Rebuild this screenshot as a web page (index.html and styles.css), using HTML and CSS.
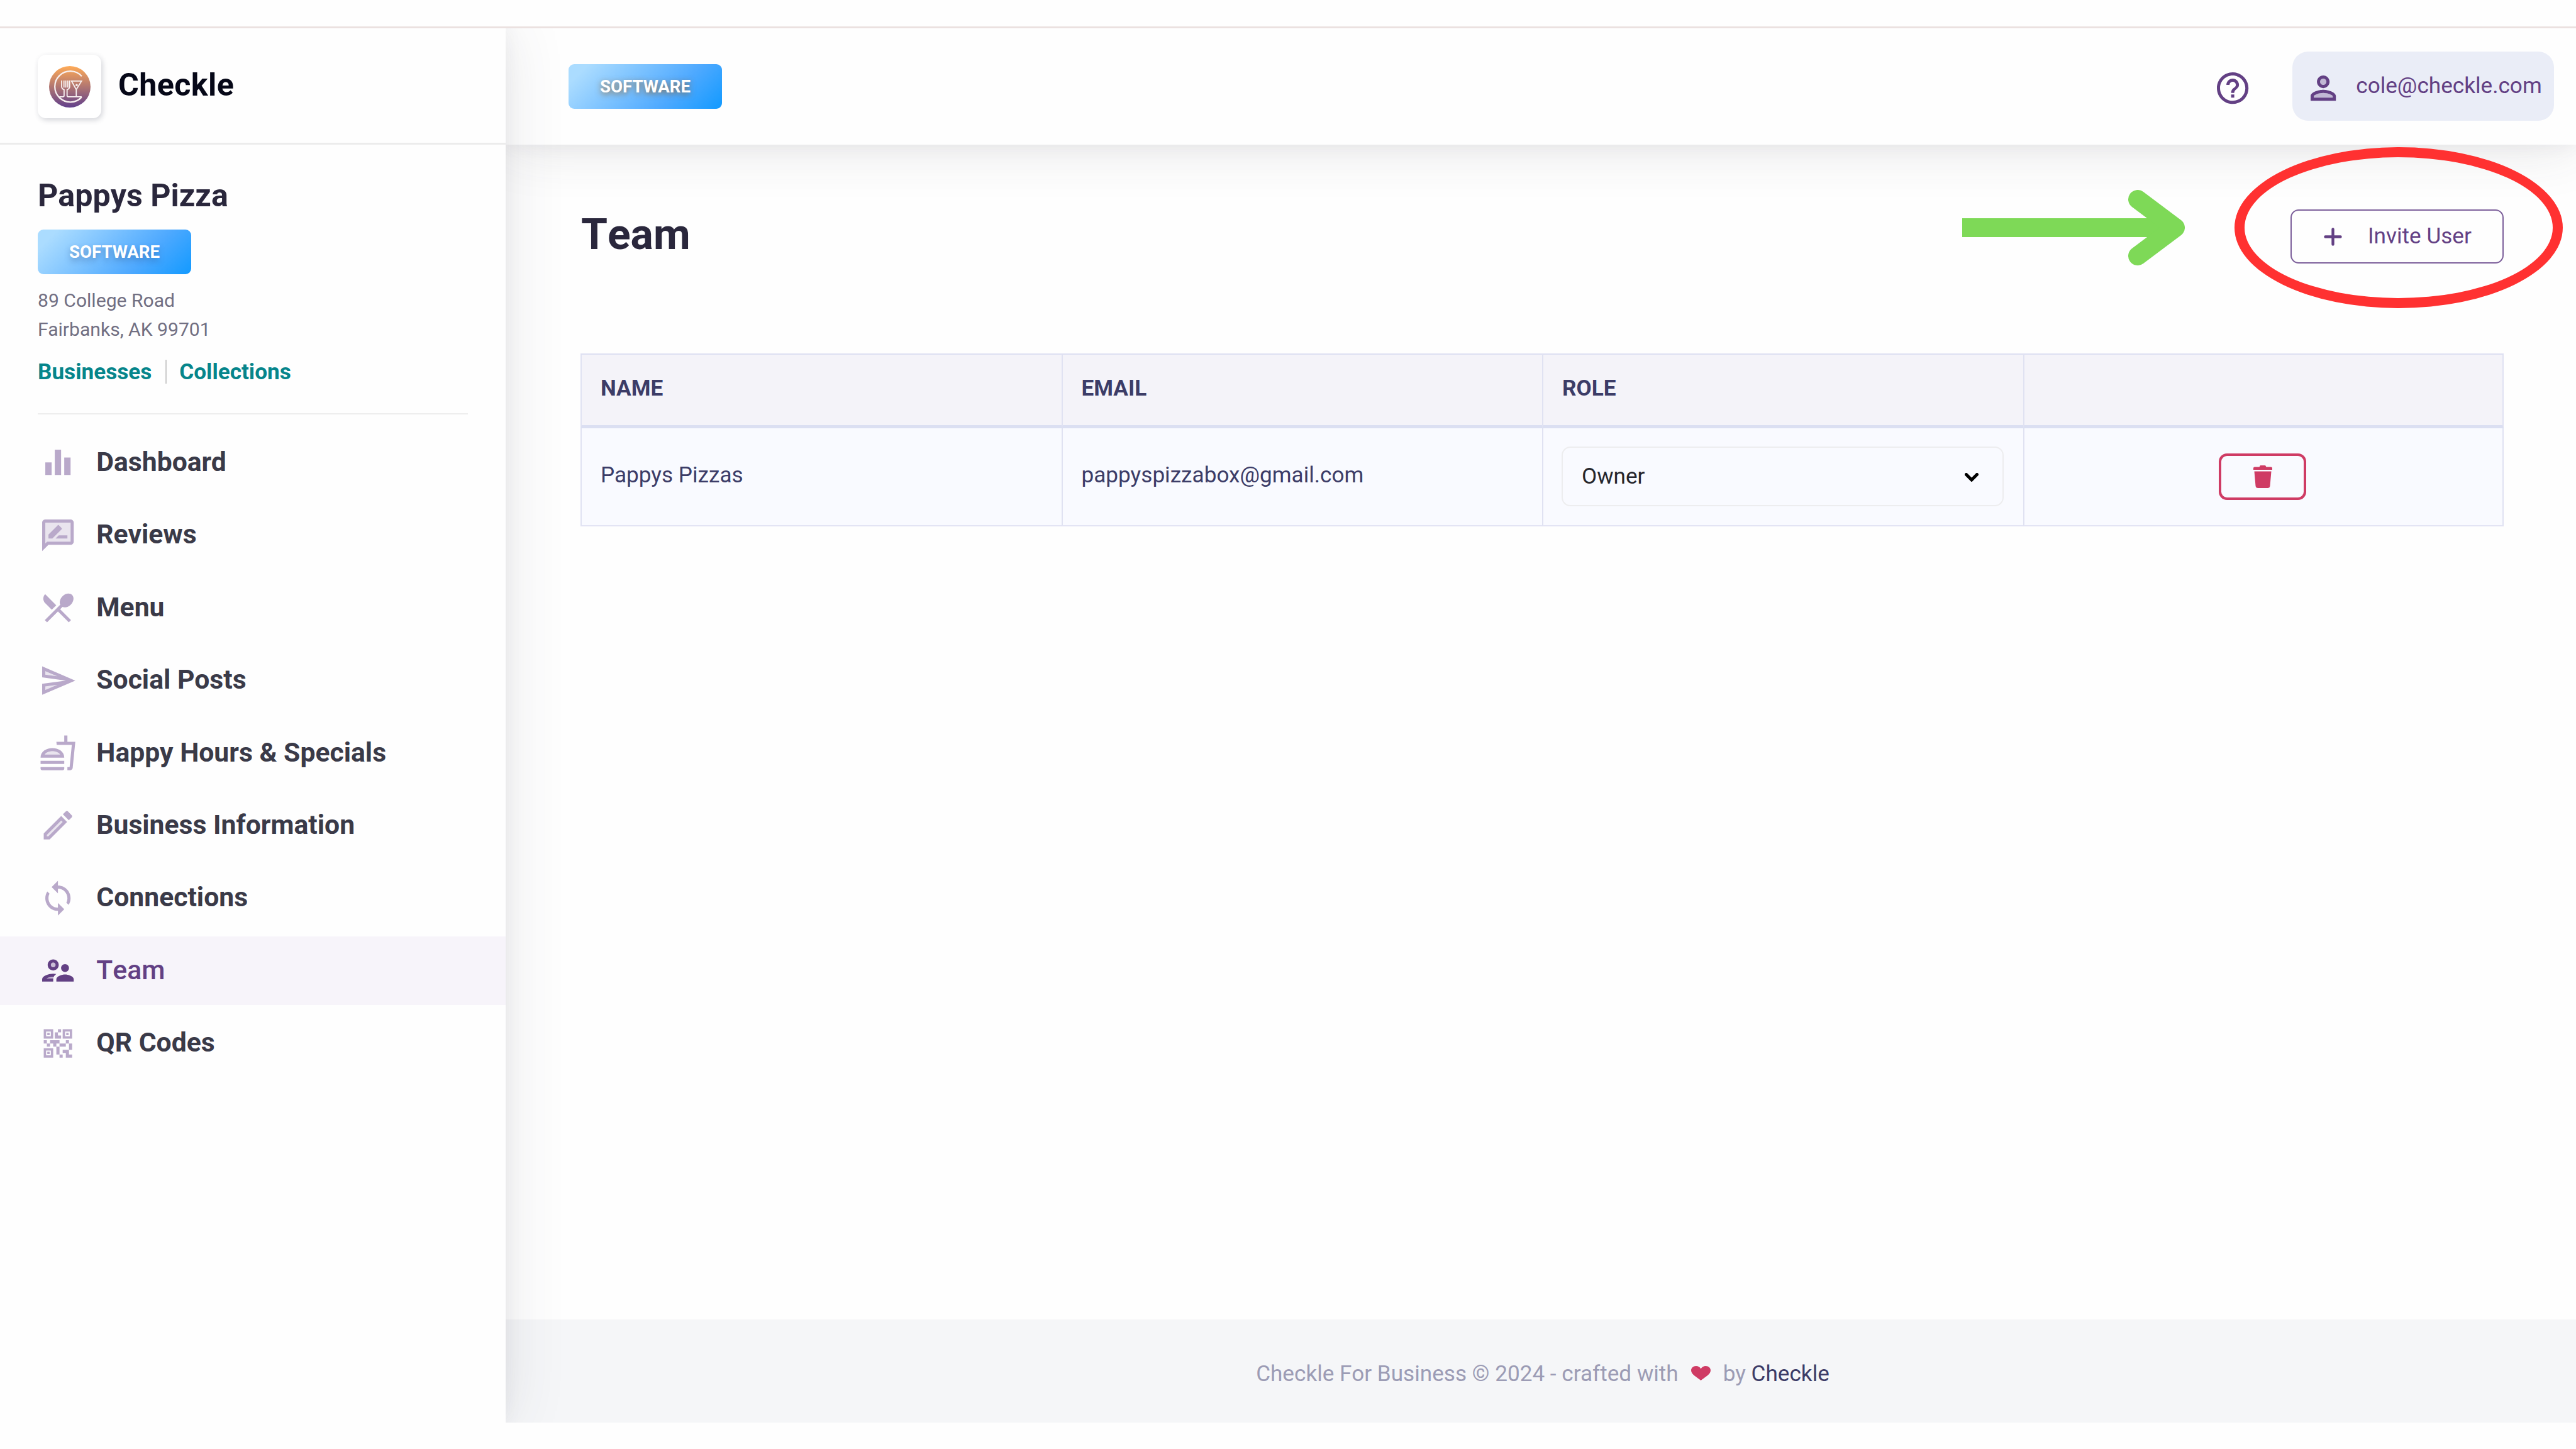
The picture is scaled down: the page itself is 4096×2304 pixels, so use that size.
FILE: index.html
```html
<!DOCTYPE html>
<html lang="en">

<head>
    <meta charset="UTF-8">
    <meta name="viewport" content="width=device-width, initial-scale=1.0">
    <title>Team - Checkle</title>
    <link rel="stylesheet" href="styles.css">
</head>

<body>
    <div class="app">
        <aside class="sidebar">
            <div class="brand">
                <div class="brand-logo">
                    <svg viewBox="118 113 290 290">
                        <defs>
                            <linearGradient id="logoFill" x1="0" y1="0" x2="0" y2="1">
                                <stop offset="0" stop-color="#ffab57" />
                                <stop offset="1" stop-color="#62408c" />
                            </linearGradient>
                        </defs>
                        <circle cx="263" cy="258" r="145" fill="url(#logoFill)" />
                        <g fill="none" stroke="#f8f1f1" stroke-width="10">
                            <path d="M346 184A108 108 0 1 0 346 330" />
                            <path d="M190 328h25q8 0 8-8v-42q-17-6-17-22v-42M222 214v50M235 214v50M249 214v50M262 214v42q0 16-18 22v42q0 8 8 8h94" stroke-width="8" />
                            <path d="M275 218h70l-37 60zM308 278v50" stroke-width="8" />
                        </g>
                        <circle cx="311" cy="246" r="8" fill="#f8f1f1" />
                    </svg>
                </div>
                <span class="brand-name">Checkle</span>
            </div>

            <div class="business">
                <h2 class="business-name">Pappys Pizza</h2>
                <span class="badge">SOFTWARE</span>
                <p class="address">89 College Road<br>Fairbanks, AK 99701</p>
                <div class="business-links">
                    <a href="#">Businesses</a>
                    <a href="#" class="link-divided">Collections</a>
                </div>
            </div>

            <nav class="nav">
                <a href="#" class="nav-item">
                    <svg class="icon" viewBox="0 0 24 24"><path d="M4 12h4v8H4zm6-8h4v16h-4zm6 5h4v11h-4z" /></svg>
                    <span>Dashboard</span>
                </a>
                <a href="#" class="nav-item">
                    <svg class="icon" viewBox="0 0 24 24">
                        <path d="M4 17.17 5.17 16H20V4H4z" opacity=".3" />
                        <path d="M20 2H4c-1.1 0-1.99.9-1.99 2L2 22l4-4h14c1.1 0 2-.9 2-2V4c0-1.1-.9-2-2-2zm0 14H5.17L4 17.17V4h16v12zm-9.5-2H18v-2h-5.5zm3.86-5.87c.2-.2.2-.51 0-.71l-1.77-1.77c-.2-.2-.51-.2-.71 0L6 11.53V14h2.47l5.89-5.87z" />
                    </svg>
                    <span>Reviews</span>
                </a>
                <a href="#" class="nav-item">
                    <svg class="icon" viewBox="0 0 24 24"><path d="M8.1 13.34l2.83-2.83L3.91 3.5c-1.56 1.56-1.56 4.09 0 5.66l4.19 4.18zm6.78-1.81c1.53.71 3.68.21 5.27-1.38 1.91-1.91 2.28-4.65.81-6.12-1.46-1.46-4.2-1.1-6.12.81-1.59 1.59-2.09 3.74-1.38 5.27L3.7 19.87l1.41 1.41L12 14.41l6.88 6.88 1.41-1.41L13.41 13l1.47-1.47z" /></svg>
                    <span>Menu</span>
                </a>
                <a href="#" class="nav-item">
                    <svg class="icon" viewBox="0 0 24 24">
                        <path d="M4 8.25l7.51 1-7.5-3.22zM4.01 17.97l7.5-3.22-7.51 1z" opacity=".3" />
                        <path d="M2.01 3L2 10l15 2-15 2 .01 7L23 12 2.01 3zM4 8.25V6.03l7.51 3.22-7.51-1zm.01 9.72v-2.22l7.51-1-7.51 3.22z" />
                    </svg>
                    <span>Social Posts</span>
                </a>
                <a href="#" class="nav-item">
                    <svg class="icon" viewBox="0 0 24 24">
                        <path d="M8.5 10.99c-1.42 0-3.77.46-4.88 2.01h9.77c-1.12-1.55-3.47-2.01-4.89-2.01z" opacity=".3" />
                        <path d="M1 21.98c0 .56.45 1.01 1.01 1.01H15c.56 0 1.01-.45 1.01-1.01V21H1v.98zM8.5 8.99C4.75 8.99 1 11 1 15h15c0-4-3.75-6.01-7.5-6.01zM3.62 13c1.11-1.55 3.47-2.01 4.88-2.01s3.77.46 4.88 2.01H3.62zM1 17h15v2H1zM18 5V1h-2v4h-5l.23 2h9.56l-1.4 14H18v2h1.72c.84 0 1.53-.65 1.63-1.47L23 5h-5z" />
                    </svg>
                    <span>Happy Hours &amp; Specials</span>
                </a>
                <a href="#" class="nav-item">
                    <svg class="icon" viewBox="0 0 24 24">
                        <path d="M5 18.08V19h.92l9.06-9.06-.92-.92z" opacity=".3" />
                        <path d="M14.06 9.02l.92.92L5.92 19H5v-.92l9.06-9.06M17.66 3c-.25 0-.51.1-.7.29l-1.83 1.83 3.75 3.75 1.83-1.83c.39-.39.39-1.02 0-1.41l-2.34-2.34c-.2-.2-.45-.29-.71-.29zm-3.6 3.19L3 17.25V21h3.75L17.81 9.94l-3.75-3.75z" />
                    </svg>
                    <span>Business Information</span>
                </a>
                <a href="#" class="nav-item">
                    <svg class="icon" viewBox="0 0 24 24"><path d="M12 4V1L8 5l4 4V6c3.31 0 6 2.69 6 6 0 1.01-.25 1.97-.7 2.8l1.46 1.46C19.54 15.03 20 13.57 20 12c0-4.42-3.58-8-8-8zm0 14c-3.31 0-6-2.69-6-6 0-1.01.25-1.97.7-2.8L5.24 7.74C4.46 8.97 4 10.43 4 12c0 4.42 3.58 8 8 8v3l4-4-4-4v3z" /></svg>
                    <span>Connections</span>
                </a>
                <a href="#" class="nav-item active">
                    <svg class="icon" viewBox="0 0 24 24">
                        <path d="M9 7a1.5 1.5 0 1 0 0 3 1.5 1.5 0 1 0 0-3zM9.05 17H4.77c.99-.5 2.7-1 4.23-1 .11 0 .23.01.34.01z" opacity=".3" />
                        <path d="M9 12c1.93 0 3.5-1.57 3.5-3.5S10.93 5 9 5 5.5 6.57 5.5 8.5 7.07 12 9 12zm0-5c.83 0 1.5.67 1.5 1.5S9.83 10 9 10s-1.5-.67-1.5-1.5S8.17 7 9 7zm.05 10H4.77c.99-.5 2.7-1 4.23-1 .11 0 .23.01.34.01.34-.73.93-1.33 1.64-1.81-.73-.13-1.42-.2-1.98-.2-2.34 0-7 1.17-7 3.5V19h7v-1.5c0-.17.02-.34.05-.5zm7.45-2.5c-1.84 0-5.5 1.01-5.5 3V19h11v-1.5c0-1.99-3.66-3-5.5-3zm1.21-1.82c.76-.43 1.29-1.24 1.29-2.18C19 9.12 17.88 8 16.5 8S14 9.12 14 10.5c0 .94.53 1.75 1.29 2.18.36.2.77.32 1.21.32s.85-.12 1.21-.32z" />
                    </svg>
                    <span>Team</span>
                </a>
                <a href="#" class="nav-item">
                    <svg class="icon" viewBox="0 0 24 24"><path fill-rule="evenodd" d="M15 21h-2v-2h2v2zm-2-7h-2v5h2v-5zm8-2h-2v4h2v-4zm-2-2h-2v2h2v-2zM7 12H5v2h2v-2zm-2-2H3v2h2v-2zm7-5h2V3h-2v2zm-7.5-.5v3h3v-3h-3zM9 9H3V3h6v6zm-4.5 7.5v3h3v-3h-3zM9 21H3v-6h6v6zm7.5-16.5v3h3v-3h-3zM21 9h-6V3h6v6zm-2 10v-3h-4v2h2v3h4v-2h-2zm-2-7h-4v2h4v-2zm-4-2H7v2h2v2h2v-2h2v-2zm1-1V7h-2V5h-2v4h4zM6.75 5.25h-1.5v1.5h1.5v-1.5zm0 12h-1.5v1.5h1.5v-1.5zm12-12h-1.5v1.5h1.5v-1.5z" /></svg>
                    <span>QR Codes</span>
                </a>
            </nav>
        </aside>

        <div class="page">
            <header class="topbar">
                <span class="badge badge-warm">SOFTWARE</span>
                <div class="topbar-right">
                    <svg class="icon help" viewBox="0 0 24 24"><path d="M11 18h2v-2h-2v2zm1-16C6.48 2 2 6.48 2 12s4.480 10 10 10 10-4.480 10-10S17.520 2 12 2zm0 18c-4.410 0-8-3.590-8-8s3.590-8 8-8 8 3.590 8 8-3.590 8-8 8zm0-14c-2.210 0-4 1.790-4 4h2c0-1.100.9-2 2-2s2 .9 2 2c0 2-3 1.750-3 5h2c0-2.250 3-2.500 3-5 0-2.210-1.790-4-4-4z" /></svg>
                    <div class="user">
                        <svg class="icon" viewBox="0 0 24 24">
                            <path d="M12 6a2 2 0 1 0 0 4 2 2 0 1 0 0-4zM12 15c-2.7 0-5.8 1.29-6 2.01V18h12v-1c-.2-.71-3.3-2-6-2z" opacity=".3" />
                            <path d="M12 12c2.21 0 4-1.79 4-4s-1.79-4-4-4-4 1.79-4 4 1.79 4 4 4zm0-6c1.1 0 2 .9 2 2s-.9 2-2 2-2-.9-2-2 .9-2 2-2zm0 7c-2.67 0-8 1.34-8 4v3h16v-3c0-2.66-5.33-4-8-4zm6 5H6v-.99c.2-.72 3.3-2.01 6-2.01s5.8 1.29 6 2v1z" />
                        </svg>
                        <span>cole@checkle.com</span>
                    </div>
                </div>
            </header>

            <main class="content">
                <div class="content-head">
                    <h1>Team</h1>
                    <button class="invite-btn">
                        <svg class="plus" viewBox="0 0 29 29"><path d="M14.5 2.5v24M2.5 14.5h24" /></svg>
                        <span>Invite User</span>
                    </button>
                </div>
                <table class="team-table">
                    <thead>
                        <tr>
                            <th>NAME</th>
                            <th>EMAIL</th>
                            <th>ROLE</th>
                            <th></th>
                        </tr>
                    </thead>
                    <tbody>
                        <tr>
                            <td class="text-cell">Pappys Pizzas</td>
                            <td class="text-cell">pappyspizzabox@gmail.com</td>
                            <td>
                                <div class="role-select">
                                    <span>Owner</span>
                                    <svg class="chevron" viewBox="0 0 22 14"><path d="M2.5 2.5l8.5 8.5 8.5-8.5" /></svg>
                                </div>
                            </td>
                            <td>
                                <button class="delete-btn">
                                    <svg viewBox="0 0 30 36"><path d="M2 2.5h7.5L11 0h8l1.5 2.5H28q2 0 2 2V7H0V4.5q0-2 2-2zM1.5 9.5h27L26.5 32.5q-.3 3.5-4 3.5h-15q-3.7 0-4-3.5z" /></svg>
                                </button>
                            </td>
                        </tr>
                    </tbody>
                </table>
            </main>

            <footer class="footer">
                <span>Checkle For Business © 2024 - crafted with</span>
                <svg class="heart" viewBox="0 0 31 23"><path d="M15.5 23C10 18 0 14 0 7 0 3 3.500 0 7.800 0c3.300 0 6 1.700 7.700 4.500C17.200 1.700 19.900 0 23.200 0 27.500 0 31 3 31 7c0 7-10 11-15.500 16z" /></svg>
                <span>by <a href="#">Checkle</a></span>
            </footer>
        </div>
    </div>

    <!-- callout marks over the invite button -->
    <svg class="arrow" viewBox="0 0 354 120">
        <path d="M0 60h335" />
        <path class="arrow-head" d="M279 15l60 45-60 45" />
    </svg>
    <div class="ring"></div>
</body>

</html>
```

FILE: styles.css
```css
* {
    box-sizing: border-box;
}

body {
    margin: 0;
    padding-top: 42px;
    height: 2304px;
    position: relative;
    overflow: hidden;
    background: #fefefe;
    font-family: Roboto, "Liberation Sans", sans-serif;
    font-size: 35.15px;
}

h1,
h2,
p {
    margin: 0;
}

h1,
h2 {
    font-kerning: none;
}

a {
    text-decoration: none;
}

button {
    font-family: inherit;
    font-size: inherit;
    padding: 0;
    background: transparent;
    cursor: pointer;
}

.app {
    display: flex;
    height: 2220px;
    border-top: 3px solid #ebe1e0;
    overflow: hidden;
}

.icon {
    width: 60.25px;
    height: 60.25px;
    flex: none;
    fill: currentColor;
}

/* sidebar */
.sidebar {
    width: 804px;
    flex: none;
    position: relative;
    z-index: 3;
    background: #fefefe;
    box-shadow: 0 0 90px rgba(60, 58, 80, 0.13), 0 0 28px rgba(60, 58, 80, 0.05);
}

.brand {
    display: flex;
    align-items: flex-start;
    height: 185px;
    padding: 42px 60px 0;
    border-bottom: 3px solid #ececec;
}

.brand-logo {
    display: flex;
    align-items: center;
    justify-content: center;
    width: 101px;
    height: 101px;
    border-radius: 13px;
    background: #fff;
    box-shadow: 2px 3px 9px rgba(40, 44, 70, 0.2);
}

.brand-logo svg {
    width: 66px;
    height: 66px;
}

.brand-name {
    margin-left: 27px;
    font-size: 50.2px;
    line-height: 96px;
    font-weight: 700;
    letter-spacing: 0.4px;
    color: #060818;
}

.business {
    margin: 0 60px;
    padding: 51px 0 47px;
    border-bottom: 2px solid #eee;
}

.business-name {
    margin-bottom: 24px;
    font-size: 50.2px;
    line-height: 60px;
    color: #2a273c;
}

.badge {
    display: block;
    width: 244px;
    height: 71px;
    border-radius: 9px;
    background: linear-gradient(135deg, #abdcff 10%, #4ea9ff 68%, #0396ff 108%);
    color: #fff;
    font-size: 27.6px;
    line-height: 72px;
    font-weight: 700;
    text-align: center;
    text-shadow: 0 5px 10px rgba(40, 70, 120, 0.4);
}

.badge-warm {
    text-shadow: 0 3px 10px rgba(150, 95, 30, 0.75);
}

.address {
    margin-top: 19px;
    font-size: 30.1px;
    line-height: 46px;
    color: #716f82;
}

.business-links {
    display: flex;
    align-items: center;
    margin-top: 25px;
    height: 38px;
}

.business-links a {
    color: #06858b;
    font-weight: 700;
    line-height: 38px;
}

.link-divided {
    margin-left: 22px;
    padding-left: 20px;
    border-left: 2px solid #ccc;
}

.nav {
    display: flex;
    flex-direction: column;
    gap: 6.4px;
    margin-top: 22px;
}

.nav-item {
    display: flex;
    align-items: center;
    gap: 31px;
    height: 109px;
    padding-left: 62px;
    color: #b9a9ca;
}

.nav-item span {
    padding-bottom: 3px;
    font-size: 42.7px;
    font-weight: 700;
    color: #3a3a48;
}

.nav-item.active {
    background: #f7f4fa;
    color: #634084;
}

.nav-item.active span {
    font-weight: 500;
    font-kerning: none;
    color: #634084;
}

/* top bar */
.page {
    flex: 1;
    display: flex;
    flex-direction: column;
}

.topbar {
    display: flex;
    align-items: center;
    justify-content: space-between;
    height: 185px;
    padding: 0 35px 0 100px;
    position: relative;
    z-index: 2;
    background: #fefefe;
    box-shadow: 0 0 90px rgba(60, 58, 70, 0.15), 0 0 28px rgba(60, 58, 80, 0.06);
}

.topbar-right {
    display: flex;
    align-items: center;
    gap: 65px;
    color: #634084;
}

.help {
    margin-top: 6px;
}

.user {
    display: flex;
    align-items: center;
    width: 416px;
    height: 110px;
    margin-bottom: 1px;
    padding-left: 19px;
    border-radius: 25px;
    background: #eaedf7;
}

.user .icon {
    margin-top: 6px;
}

.user span {
    margin-left: 22px;
    padding-bottom: 2px;
}

/* content */
.content {
    flex: 1;
    padding: 103px 115px 0 119px;
}

.content-head {
    display: flex;
    align-items: center;
    justify-content: space-between;
    height: 86px;
    margin-bottom: 143px;
}

.content h1 {
    padding: 0 0 6px 1px;
    font-size: 67.8px;
    line-height: 80px;
    font-weight: 700;
    color: #2a273c;
}

.invite-btn {
    display: flex;
    align-items: center;
    width: 339px;
    height: 86px;
    padding-left: 51px;
    border: 2px solid #7d609b;
    border-radius: 13px;
    color: #634084;
}

.plus {
    width: 29px;
    height: 29px;
    margin-right: 41px;
    fill: none;
    stroke: currentColor;
    stroke-width: 4.4;
    stroke-linecap: round;
}

.invite-btn span {
    padding-bottom: 3px;
}

.team-table {
    width: 100%;
    table-layout: fixed;
    border-spacing: 0;
    color: #3c3c67;
}

.team-table th {
    height: 119px;
    padding: 0 30px 6px;
    border-top: 2px solid #dddff2;
    border-bottom: 5px solid #dbdff2;
    border-left: 2px solid #e0e2f2;
    background: #f4f3f9;
    text-align: left;
    font-weight: 700;
}

.team-table td {
    height: 156px;
    padding: 0 31px 0 29px;
    border-bottom: 2px solid #e3e4f4;
    border-left: 2px solid #e0e2f2;
    background: #f9faff;
}

.team-table th:last-child,
.team-table td:last-child {
    border-right: 2px solid #e0e2f2;
}

.team-table .text-cell {
    padding: 0 30px 6px;
}

.role-select {
    display: flex;
    align-items: center;
    justify-content: space-between;
    height: 95px;
    margin-bottom: 1px;
    padding: 0 38px 0 30px;
    border: 2px solid #ededef;
    border-radius: 14px;
    color: #26262c;
}

.role-select span {
    padding-bottom: 2px;
}

.chevron {
    width: 22px;
    height: 14px;
    margin-top: 3px;
    fill: none;
    stroke: #000;
    stroke-width: 5;
    stroke-linecap: round;
}

.delete-btn {
    display: flex;
    align-items: center;
    justify-content: center;
    width: 139px;
    height: 74px;
    margin: 0 auto;
    border: 4.5px solid #cf3b64;
    border-radius: 13px;
}

.delete-btn svg {
    width: 30px;
    height: 36px;
    fill: #cf3b64;
}

.footer {
    display: flex;
    align-items: center;
    justify-content: center;
    height: 164px;
    padding: 7px 0 0 6px;
    background: #f5f6f8;
    color: #9c9cb5;
}

.footer a {
    color: #3c3c67;
}

.heart {
    width: 31px;
    height: 23px;
    margin: 0 20px;
    fill: #cf3b64;
}

/* callout */
.arrow {
    position: absolute;
    left: 3120px;
    top: 302px;
    width: 354px;
    height: 120px;
    z-index: 5;
    fill: none;
    stroke: #7ed957;
    stroke-width: 30;
}

.arrow-head {
    stroke-linecap: round;
    stroke-linejoin: round;
}

.ring {
    position: absolute;
    left: 3553px;
    top: 234px;
    width: 522px;
    height: 256px;
    z-index: 5;
    border: 16px solid #ff3131;
    border-radius: 50%;
}
```
